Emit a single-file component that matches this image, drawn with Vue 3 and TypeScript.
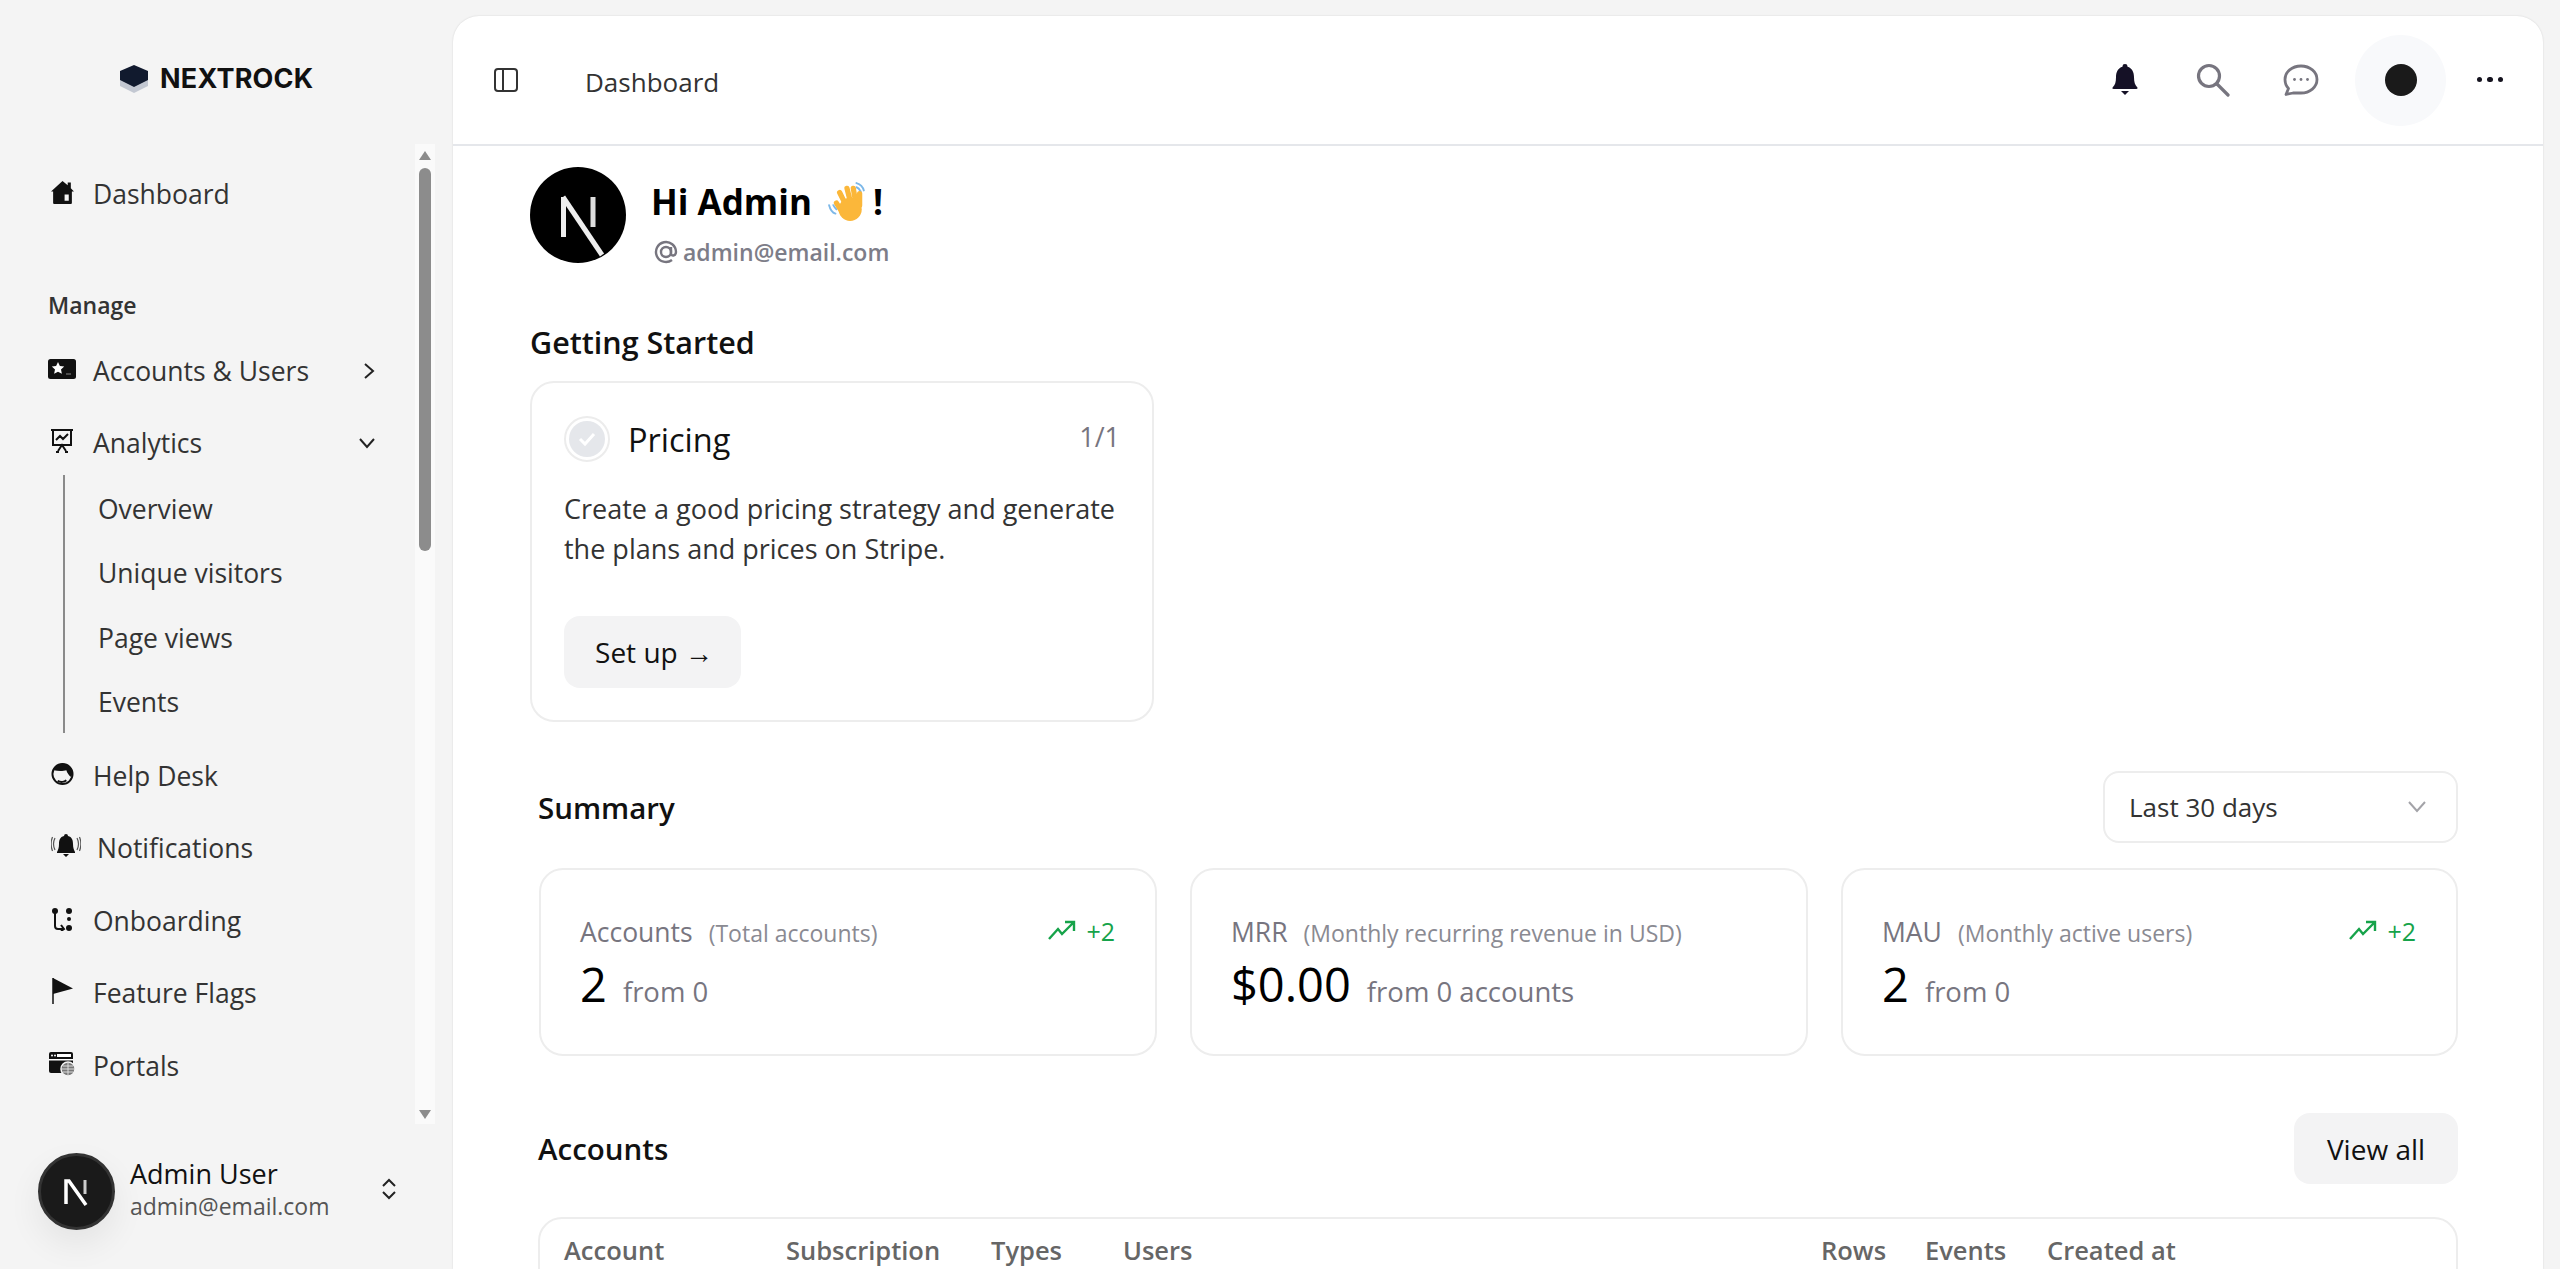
<template>
  <div class="app">
    <aside class="sidebar">
      <div class="brand">
        <svg width="30" height="28" viewBox="0 0 30 28">
          <path d="M15 6 29 13v8l-14 7L1 21v-8z" fill="#c3c8d2" />
          <path d="M15 0 29 6v9l-14 7L1 15V6z" fill="#111a2e" />
        </svg>
        <span>NEXTROCK</span>
      </div>

      <div class="nav-wrap">
        <nav class="nav">
          <a class="item first">
            <span class="ico">
              <svg width="25" height="25" viewBox="0 0 24 24"><path fill="#111" d="M12 1 17 5V2.500h3V8l3 3h-2v11a1 1 0 0 1-1 1H4a1 1 0 0 1-1-1V11H1zM14 14v6h4v-6z" fill-rule="evenodd" /></svg>
            </span>
            Dashboard
          </a>

          <div class="group-title">Manage</div>

          <a class="item">
            <span class="ico">
              <svg width="28" height="20" viewBox="0 0 28 20"><rect width="28" height="20" rx="2.500" fill="#111" /><path fill="#fff" d="m10 3 1.900 4 4.300.5-3.200 3 .9 4.300L10 12.700l-3.900 2.100.9-4.300-3.200-3 4.300-.5z" /><path stroke="#777" stroke-width="1.200" d="M18 15h5" /></svg>
            </span>
            Accounts &amp; Users
            <svg class="chev" width="14" height="18" viewBox="0 0 14 18" fill="none" stroke="#222" stroke-width="2"><path d="m3 2 8 7-8 7" /></svg>
          </a>

          <a class="item">
            <span class="ico">
              <svg width="24" height="26" viewBox="0 0 24 26" fill="none" stroke="#111" stroke-width="2"><path d="M1 2h22M3 2v15h18V2M6 12l4-4 3 3 5-5M8 23l4-6 4 6M6 24h3M15 24h3" /></svg>
            </span>
            Analytics
            <svg class="chev" width="18" height="14" viewBox="0 0 18 14" fill="none" stroke="#222" stroke-width="2"><path d="m2 3 7 8 7-8" /></svg>
          </a>

          <div class="sub">
            <a v-for="s in subItems" :key="s" class="sub-item">{{ s }}</a>
          </div>

          <a class="item help">
            <span class="ico">
              <svg width="23" height="26" viewBox="0 0 24 26"><circle cx="12" cy="13" r="10.500" fill="none" stroke="#111" stroke-width="2" /><path fill="#111" d="M3 9C4 5 8 2 12 2c6 0 10 4 10 10 0 2 0 3-1 4-2-1-4-4-5-7-3 1-9 1-13 0z" /><path d="M7 20c3 2 7 1.500 9-.5" fill="none" stroke="#111" stroke-width="2" /></svg>
            </span>
            Help Desk
          </a>

          <a class="item notif">
            <span class="ico">
              <svg width="30" height="24" viewBox="0 0 30 24"><path fill="#111" d="M15 0a2 2 0 0 1 2 2c4 1 5 4 5 8 0 4 1 6 2 8v1H6v-1c1-2 2-4 2-8 0-4 1-7 5-8a2 2 0 0 1 2-2zM12 20h6l-3 3z" /><path fill="none" stroke="#555" stroke-width="1.200" d="M4 4C2 8 2 12 4 16M1.500 3C-.5 8-.5 12 1.500 17M26 4c2 4 2 8 0 12M28.500 3c2 5 2 9 0 14" /></svg>
            </span>
            Notifications
          </a>

          <a class="item">
            <span class="ico">
              <svg width="24" height="24" viewBox="0 0 24 24"><circle cx="5" cy="4" r="3" fill="#111" /><circle cx="19" cy="4" r="3" fill="#111" /><circle cx="19" cy="21" r="3" fill="#111" /><circle cx="19" cy="12" r="2" fill="#111" /><path fill="none" stroke="#111" stroke-width="2" d="M5 5v14c0 2 1 3 3 3h6M11 18l3 4-3 2" /></svg>
            </span>
            Onboarding
          </a>

          <a class="item">
            <span class="ico">
              <svg width="24" height="28" viewBox="0 0 24 28"><path d="M3 1v26" stroke="#111" stroke-width="1.500" /><path fill="#111" d="M3 1l20 10.500L3 17z" /></svg>
            </span>
            Feature Flags
          </a>

          <a class="item">
            <span class="ico">
              <svg width="28" height="26" viewBox="0 0 28 26"><path fill="#111" d="M1 3a2 2 0 0 1 2-2h20a2 2 0 0 1 2 2v19H3a2 2 0 0 1-2-2z" /><rect x="9" y="3" width="14" height="3" fill="#fff" /><circle cx="4" cy="4.500" r="1" fill="#fff" /><circle cx="7" cy="4.500" r="1" fill="#fff" /><rect x="1" y="8" width="24" height="1.500" fill="#fff" /><circle cx="20" cy="18" r="7" fill="#777" stroke="#f4f4f4" stroke-width="1.500" /><path fill="none" stroke="#ddd" stroke-width="1" d="M14 18h12M20 12v12M15 15h10M15 21h10" /></svg>
            </span>
            Portals
          </a>
        </nav>

        <div class="fake-scroll">
          <i class="arrow up"></i>
          <i class="thumb"></i>
          <i class="arrow down"></i>
        </div>
      </div>

      <div class="user">
        <div class="user-avatar">
          <svg width="30" height="30" viewBox="0 0 30 30"><path d="M4 27V4h3l17 24" fill="none" stroke="#fff" stroke-width="3.500" /><path d="M23 3v14" stroke="#ccc" stroke-width="3" /></svg>
        </div>
        <div class="user-text">
          <div class="user-name">Admin User</div>
          <div class="user-mail">admin@email.com</div>
        </div>
        <svg class="updown" width="18" height="24" viewBox="0 0 18 24" fill="none" stroke="#222" stroke-width="2"><path d="m3 9 6-6 6 6M3 15l6 6 6-6" /></svg>
      </div>
    </aside>

    <main class="panel">
      <header class="topbar">
        <svg class="toggle" width="24" height="24" viewBox="0 0 24 24" fill="none" stroke="#333" stroke-width="2"><rect x="1" y="1" width="22" height="22" rx="3" /><path d="M9 1v22" /></svg>
        <span class="crumb">Dashboard</span>
        <div class="tools">
          <button class="tool">
            <svg width="26" height="32" viewBox="0 0 26 32"><path fill="#151126" d="M13 0a2.500 2.500 0 0 1 2.500 2.700C20 4 22 8 22 13c0 5 1 8 3 10 1 1 .5 2-.5 2H1.500c-1 0-1.500-1-.5-2 2-2 3-5 3-10 0-5 2-9 6.500-10.300A2.500 2.500 0 0 1 13 0zM9 27h8l-4 4z" /></svg>
          </button>
          <button class="tool">
            <svg width="34" height="34" viewBox="0 0 34 34" fill="none" stroke="#77757f" stroke-width="3.200" stroke-linecap="round"><circle cx="13" cy="13" r="10.500" /><path d="m21 21 11 11" /></svg>
          </button>
          <button class="tool">
            <svg width="36" height="32" viewBox="0 0 36 32" fill="none" stroke="#77757f" stroke-width="2.800"><path d="M18 2c9 0 16 6 16 13.500S27 29 18 29c-3 0-6 0-8 0l-7 1.500 2.500-6C3 22 2 19 2 15.500 2 8 9 2 18 2z" stroke-linejoin="round" /><circle cx="11.500" cy="15.500" r="1.400" fill="#77757f" stroke="none" /><circle cx="18" cy="15.500" r="1.400" fill="#77757f" stroke="none" /><circle cx="24.500" cy="15.500" r="1.400" fill="#77757f" stroke="none" /></svg>
          </button>
          <button class="tool dot-wrap"><i class="dot"></i></button>
          <button class="tool more"><i></i><i></i><i></i></button>
        </div>
      </header>

      <div class="content">
        <section class="hello">
          <div class="big-avatar">
            <svg width="96" height="96" viewBox="0 0 96 96"><path d="M33.500 70V30" stroke="#eee" stroke-width="5" /><path d="M33 30 72 88" stroke="#eee" stroke-width="5" /><path d="M63 30v30" stroke="#ddd" stroke-width="5" /></svg>
          </div>
          <div>
            <h1>
              Hi Admin
              <svg class="wave" width="40" height="40" viewBox="0 0 38 38">
                <path fill="none" stroke="#7db8e8" stroke-width="1.800" stroke-linecap="round" d="M2 22c1 4 3 7 6 8M6 22c1 2 2 3 3 4M28 1c3 1 6 3 7 7M28 5c2 .5 3 2 4 4" />
                <g fill="none" stroke="#fbb73a" stroke-width="5" stroke-linecap="round">
                  <path d="M17 20 12 10M22 18 19 6M27 18 25 6M31 22 31 11M14 28 9 20" />
                </g>
                <circle cx="22" cy="26" r="11" fill="#fbb73a" />
              </svg>!
            </h1>
            <div class="mail">
              <svg width="24" height="24" viewBox="0 0 24 24" fill="none" stroke="#77757f" stroke-width="2.400"><circle cx="12" cy="12" r="5" /><path d="M17 7v6c0 4 5 3 5-1a10 10 0 1 0-4 8" /></svg>
              admin@email.com
            </div>
          </div>
        </section>

        <h2 class="started">Getting Started</h2>
        <div class="card start-card">
          <div class="start-head">
            <span class="check">
              <svg width="36" height="36" viewBox="0 0 36 36"><circle cx="18" cy="18" r="18" fill="#e5e7eb" /><path d="m11 18 5 5 9-10" fill="none" stroke="#fff" stroke-width="3" /></svg>
            </span>
            <span class="start-title">Pricing</span>
            <span class="count">1/1</span>
          </div>
          <p>Create a good pricing strategy and generate the plans and prices on Stripe.</p>
          <button class="soft-btn">Set up →</button>
        </div>

        <div class="section-head summary-head">
          <h2>Summary</h2>
          <div class="select">
            Last 30 days
            <svg width="22" height="14" viewBox="0 0 22 14" fill="none" stroke="#a3a3a8" stroke-width="2"><path d="m3 2 8 9 8-9" /></svg>
          </div>
        </div>

        <div class="stats">
          <div v-for="s in stats" :key="s.name" class="card stat">
            <div class="stat-top">
              <span class="stat-name">{{ s.name }}</span>
              <span class="stat-desc">({{ s.desc }})</span>
              <span v-if="s.delta" class="delta">
                <svg width="28" height="22" viewBox="0 0 28 22" fill="none" stroke="#16a34a" stroke-width="2.400"><path d="M1 19 10 9l4 5L26 2M17 2h9v9" /></svg>
                {{ s.delta }}
              </span>
            </div>
            <div class="stat-bottom">
              <span class="stat-value">{{ s.value }}</span>
              <span class="stat-from">{{ s.from }}</span>
            </div>
          </div>
        </div>

        <div class="section-head accounts-head">
          <h2>Accounts</h2>
          <button class="soft-btn view">View all</button>
        </div>

        <div class="card table-card">
          <div class="thead">
            <span v-for="c in columns" :key="c.label" :style="{ width: c.width + 'px' }">{{ c.label }}</span>
          </div>
        </div>
      </div>
    </main>
  </div>
</template>

<script setup lang="ts">
interface Stat {
  name: string
  desc: string
  value: string
  from: string
  delta?: string
}

const subItems: string[] = ['Overview', 'Unique visitors', 'Page views', 'Events']

const stats: Stat[] = [
  { name: 'Accounts', desc: 'Total accounts', value: '2', from: 'from 0', delta: '+2' },
  { name: 'MRR', desc: 'Monthly recurring revenue in USD', value: '$0.00', from: 'from 0 accounts' },
  { name: 'MAU', desc: 'Monthly active users', value: '2', from: 'from 0', delta: '+2' }
]

const columns = [
  { label: 'Account', width: 222 },
  { label: 'Subscription', width: 205 },
  { label: 'Types', width: 132 },
  { label: 'Users', width: 698 },
  { label: 'Rows', width: 104 },
  { label: 'Events', width: 122 },
  { label: 'Created at', width: 200 }
]
</script>

<style>
html,
body {
  margin: 0;
  height: 100%;
  overflow: hidden;
  background: #f4f4f4;
}
</style>

<style scoped>
.app {
  display: flex;
  height: 1269px;
  overflow: hidden;
  background: #f4f4f4;
  font-family: "Open Sans", "Noto Sans", sans-serif;
  color: #111;
}

.sidebar {
  width: 452px;
  flex: none;
  display: flex;
  flex-direction: column;
}
.brand {
  height: 144px;
  padding-left: 119px;
  box-sizing: border-box;
  display: flex;
  align-items: flex-start;
  gap: 11px;
}
.brand svg {
  margin-top: 65px;
}
.brand span {
  margin-top: 60px;
  font-family: Inter, sans-serif;
  font-size: 27px;
  line-height: 38px;
  font-weight: 700;
  letter-spacing: 0.2px;
  color: #111;
}

.nav-wrap {
  height: 980px;
  display: flex;
}
.nav {
  width: 415px;
  padding-left: 48px;
  box-sizing: border-box;
  overflow: hidden;
}
.item {
  display: flex;
  align-items: center;
  height: 72.500px;
  font-size: 26.500px;
  color: #333;
  position: relative;
}
.item.first {
  margin-top: 14px;
}
.ico {
  width: 45px;
  flex: none;
  display: flex;
  justify-content: center;
  padding-right: 17px;
  box-sizing: border-box;
  margin-top: -4px;
}
.chev {
  position: absolute;
  right: 39px;
  top: 50%;
  transform: translateY(-50%);
}
.group-title {
  margin-top: 51px;
  height: 53px;
  line-height: 46px;
  font-size: 23px;
  font-weight: 600;
  color: #333;
}
.sub {
  margin: -5px 0 0 15px;
  border-left: 2px solid #8a8a8a;
  padding: 2px 0 0 33px;
  height: 258px;
  box-sizing: border-box;
}
.sub-item {
  display: block;
  height: 64.500px;
  line-height: 64.500px;
  font-size: 26.500px;
  color: #333;
}
.help {
  margin-top: 7px;
}
.notif .ico {
  padding-right: 13px;
  width: 49px;
}
.fake-scroll {
  width: 20px;
  background: #fafafa;
  display: flex;
  flex-direction: column;
  align-items: center;
  position: relative;
}
.thumb {
  position: absolute;
  top: 24px;
  left: 4px;
  width: 12px;
  height: 383px;
  border-radius: 6px;
  background: #8c8c8c;
}
.arrow {
  position: absolute;
  left: 4px;
  width: 0;
  height: 0;
  border-left: 6px solid transparent;
  border-right: 6px solid transparent;
}
.arrow.up {
  top: 7px;
  border-bottom: 9px solid #8c8c8c;
}
.arrow.down {
  bottom: 5px;
  border-top: 9px solid #8c8c8c;
}

.user {
  margin-top: auto;
  position: relative;
  display: flex;
  align-items: center;
  padding: 0 0 39px 38px;
}
.user-avatar {
  width: 77px;
  height: 77px;
  box-sizing: border-box;
  flex: none;
  border-radius: 50%;
  background: #1a1a1a;
  border: 3px solid #333;
  box-shadow: 0 14px 34px rgba(0, 0, 0, 0.07);
  display: flex;
  align-items: center;
  justify-content: center;
}
.user-text {
  margin: -6px 0 0 15px;
}
.user-name {
  font-size: 27px;
  line-height: 34px;
  font-weight: 500;
  color: #111;
}
.user-mail {
  font-size: 23px;
  line-height: 30px;
  color: #555;
}
.updown {
  position: absolute;
  left: 380px;
  top: 24px;
}

.panel {
  flex: 1;
  margin: 16px 17px 0 1px;
  background: #fff;
  border-radius: 26px 26px 0 0;
  box-shadow: 0 0 2px rgba(0, 0, 0, 0.14);
  overflow: hidden;
  min-width: 0;
}
.topbar {
  height: 128px;
  box-sizing: content-box;
  border-bottom: 2px solid #e5e7eb;
  display: flex;
  align-items: center;
  padding-left: 41px;
}
.toggle {
  margin-top: -1px;
}
.crumb {
  margin-left: 67px;
  font-size: 26px;
  color: #333;
  margin-top: 4px;
}
.tools {
  margin-left: auto;
  display: flex;
  align-items: center;
  padding-right: 20px;
}
.tool {
  width: 88px;
  height: 88px;
  border: 0;
  padding: 0;
  background: none;
  display: flex;
  align-items: center;
  justify-content: center;
  margin-top: -1px;
}
.dot-wrap {
  width: 91px;
  height: 91px;
  margin: 0 11px 0 10px;
  border-radius: 50%;
  background: #f8f9fb;
}
.dot {
  width: 32px;
  height: 32px;
  border-radius: 50%;
  background: #1a1a1a;
}
.more {
  width: 66px;
  gap: 5px;
}
.more i {
  width: 5.500px;
  height: 5.500px;
  border-radius: 50%;
  background: #15131f;
}

.content {
  padding: 21px 85px 0 77px;
}
.hello {
  display: flex;
  align-items: flex-start;
  gap: 25px;
  height: 96px;
}
.big-avatar {
  width: 96px;
  height: 96px;
  flex: none;
  border-radius: 50%;
  background: #000;
  overflow: hidden;
}
h1 {
  margin: 13px 0 0;
  font-size: 35px;
  line-height: 44px;
  font-weight: 700;
  color: #000;
  display: flex;
  align-items: center;
  gap: 0;
}
.wave {
  margin: 0 6px 0 15px;
}
.mail {
  display: flex;
  align-items: center;
  gap: 5px;
  margin-top: 13px;
  margin-left: 3px;
  font-size: 23px;
  line-height: 30px;
  font-weight: 600;
  color: #7d7d88;
}

h2 {
  margin: 0;
  font-size: 29.500px;
  line-height: 40px;
  font-weight: 600;
  color: #111;
}
.section-head h2 {
  padding-top: 1px;
}
h2.started {
  margin-top: 59px;
  font-size: 30.500px;
}
.card {
  box-sizing: border-box;
  background: #fff;
  border: 2px solid #ededed;
  border-radius: 24px;
}
.start-card {
  width: 624px;
  height: 341px;
  margin-top: 19px;
  padding: 33px 32px 0 32px;
}
.start-head {
  display: flex;
  align-items: center;
  height: 46px;
}
.check {
  width: 46px;
  height: 46px;
  box-sizing: border-box;
  border: 2px solid #ececec;
  border-radius: 50%;
  display: flex;
  align-items: center;
  justify-content: center;
}
.start-title {
  margin-left: 18px;
  font-size: 32.500px;
  font-weight: 500;
  color: #111;
}
.count {
  margin-left: auto;
  margin-top: -6px;
  font-size: 27px;
  color: #77757f;
}
.start-card p {
  margin: 27px 0 0;
  font-size: 27px;
  line-height: 40px;
  color: #333;
  width: 565px;
}
.soft-btn {
  border: 0;
  background: #f3f3f4;
  border-radius: 16px;
  font-family: inherit;
  color: #111;
  font-size: 28px;
  font-weight: 500;
}
.start-card .soft-btn {
  display: block;
  width: 177px;
  height: 72px;
  margin-top: 47px;
  padding: 0 0 0 3px;
}

.section-head {
  display: flex;
  align-items: center;
  justify-content: space-between;
  margin-left: 8px;
}
.summary-head {
  margin-top: 49px;
}
.select {
  width: 355px;
  height: 72px;
  box-sizing: border-box;
  border: 2px solid #ededed;
  border-radius: 16px;
  display: flex;
  align-items: center;
  justify-content: space-between;
  padding: 0 28px 0 24px;
  font-size: 26px;
  color: #333;
}
.stats {
  margin: 25px 0 0 9px;
  display: grid;
  grid-template-columns: 618px 618px 617px;
  column-gap: 33px;
}
.stat {
  height: 188px;
  padding: 44px 40px 0 39px;
}
.stat-top {
  display: flex;
  align-items: baseline;
  gap: 16px;
}
.stat-name {
  font-size: 26.500px;
  color: #77757f;
}
.stat-desc {
  font-size: 23px;
  color: #8a8a92;
}
.delta {
  margin-left: auto;
  display: flex;
  align-items: center;
  gap: 10px;
  font-size: 25px;
  color: #16a34a;
}
.stat-bottom {
  display: flex;
  align-items: baseline;
  gap: 16px;
  margin-top: 6px;
}
.stat-value {
  font-size: 47px;
  line-height: 56px;
  font-weight: 500;
  color: #000;
}
.stat-from {
  font-size: 27.500px;
  font-weight: 500;
  color: #77757f;
}
.accounts-head {
  margin-top: 57px;
}
.view {
  width: 164px;
  height: 71px;
  padding: 0;
}
.table-card {
  margin: 33px 0 0 8px;
  width: 1920px;
  height: 200px;
  padding: 13px 0 0 24px;
}
.thead {
  display: flex;
  font-size: 25.500px;
  line-height: 36px;
  font-weight: 600;
  color: #666;
}
.thead span {
  flex: none;
}
</style>
